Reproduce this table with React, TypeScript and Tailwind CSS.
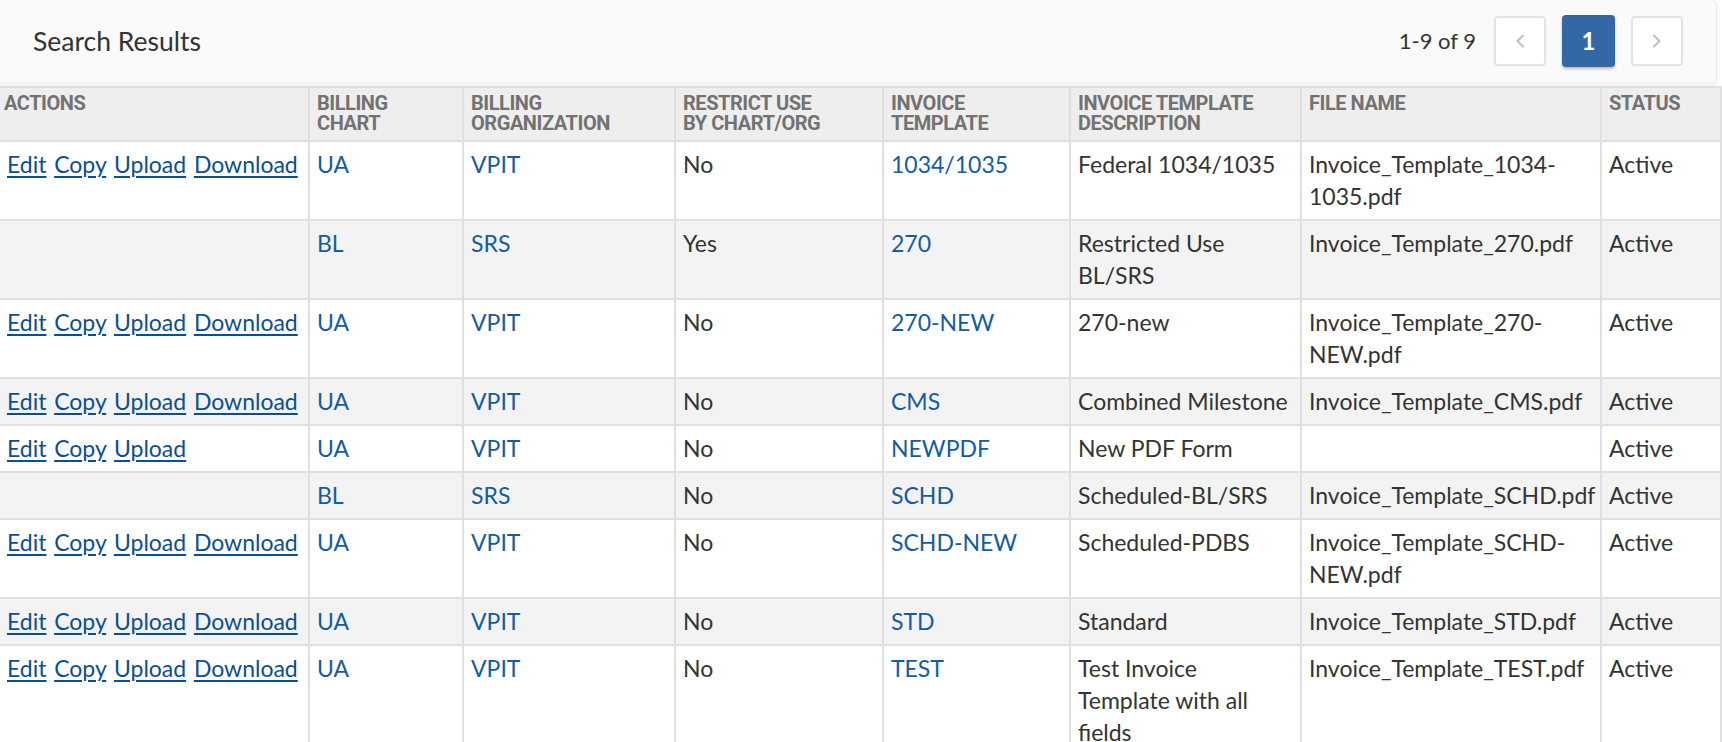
import { FC } from 'react';

type Row = {
  actions: string[];
  chart: string;
  org: string;
  restrict: string;
  template: string;
  description: string;
  fileName: string;
  status: string;
};

const ALL = ['Edit', 'Copy', 'Upload', 'Download'];

const rows: Row[] = [
  { actions: ALL, chart: 'UA', org: 'VPIT', restrict: 'No', template: '1034/1035', description: 'Federal 1034/1035', fileName: 'Invoice_Template_1034-1035.pdf', status: 'Active' },
  { actions: [], chart: 'BL', org: 'SRS', restrict: 'Yes', template: '270', description: 'Restricted Use BL/SRS', fileName: 'Invoice_Template_270.pdf', status: 'Active' },
  { actions: ALL, chart: 'UA', org: 'VPIT', restrict: 'No', template: '270-NEW', description: '270-new', fileName: 'Invoice_Template_270-NEW.pdf', status: 'Active' },
  { actions: ALL, chart: 'UA', org: 'VPIT', restrict: 'No', template: 'CMS', description: 'Combined Milestone', fileName: 'Invoice_Template_CMS.pdf', status: 'Active' },
  { actions: ['Edit', 'Copy', 'Upload'], chart: 'UA', org: 'VPIT', restrict: 'No', template: 'NEWPDF', description: 'New PDF Form', fileName: '', status: 'Active' },
  { actions: [], chart: 'BL', org: 'SRS', restrict: 'No', template: 'SCHD', description: 'Scheduled-BL/SRS', fileName: 'Invoice_Template_SCHD.pdf', status: 'Active' },
  { actions: ALL, chart: 'UA', org: 'VPIT', restrict: 'No', template: 'SCHD-NEW', description: 'Scheduled-PDBS', fileName: 'Invoice_Template_SCHD-NEW.pdf', status: 'Active' },
  { actions: ALL, chart: 'UA', org: 'VPIT', restrict: 'No', template: 'STD', description: 'Standard', fileName: 'Invoice_Template_STD.pdf', status: 'Active' },
  { actions: ALL, chart: 'UA', org: 'VPIT', restrict: 'No', template: 'TEST', description: 'Test Invoice Template with all fields', fileName: 'Invoice_Template_TEST.pdf', status: 'Active' },
];

// header labels, one entry per printed line
const headers: string[][] = [
  ['ACTIONS'],
  ['BILLING', 'CHART'],
  ['BILLING', 'ORGANIZATION'],
  ['RESTRICT USE', 'BY CHART/ORG'],
  ['INVOICE', 'TEMPLATE'],
  ['INVOICE TEMPLATE', 'DESCRIPTION'],
  ['FILE NAME'],
  ['STATUS'],
];

const widths = ['w-[309px]', 'w-[154px]', 'w-[212px]', 'w-[208px]', 'w-[187px]', 'w-[231px]', 'w-[300px]', 'w-[120px]'];

const Chevron: FC<{ dir: 'left' | 'right' }> = ({ dir }) => (
  <svg width="10" height="14" viewBox="0 0 10 14" fill="none">
    <polyline
      points={dir === 'left' ? '8,1.5 2.5,7 8,12.5' : '2,1.5 7.5,7 2,12.5'}
      stroke="#c2c2c2"
      strokeWidth="2.2"
      strokeLinecap="round"
      strokeLinejoin="round"
    />
  </svg>
);

const App: FC = () => {
  return (
    <div className="h-[742px] w-[1722px] overflow-hidden bg-white font-['Lato','Noto_Sans',sans-serif] text-[#333]">
      {/* Panel heading */}
      <div className="flex h-[82px] w-[1716px] items-center justify-between rounded-tr-[6px] bg-[#fafafa] pl-[33px] pr-[33px] shadow-[1px_0_2px_rgba(0,0,0,0.12)]">
        <div className="text-[26.5px] leading-none">Search Results</div>
        <div className="flex items-center">
          <div className="mr-[18px] text-[22px] leading-none">1-9 of 9</div>
          <button className="flex h-[50px] w-[52px] items-center justify-center rounded-[4px] border-2 border-[#e3e3e3] bg-white">
            <Chevron dir="left" />
          </button>
          <button className="mx-[16px] flex h-[52px] w-[53px] items-center justify-center rounded-[4px] bg-[#3467a5] text-[24px] font-bold text-white shadow-[0_2px_3px_rgba(0,0,0,0.25)]">
            1
          </button>
          <button className="flex h-[50px] w-[52px] items-center justify-center rounded-[4px] border-2 border-[#e3e3e3] bg-white">
            <Chevron dir="right" />
          </button>
        </div>
      </div>
      <div className="h-[4px] w-[1716px] bg-[#f3f3f3]" />

      {/* Results table */}
      <table className="w-[1721px] table-fixed border-collapse">
        <colgroup>
          {widths.map((w, i) => (
            <col key={i} className={w} />
          ))}
        </colgroup>
        <thead>
          <tr className="bg-[#eeeeee]">
            {headers.map((h, i) => (
              <th
                key={h.join(' ')}
                className={`border-2 border-[#e0e0e0] pt-[5px] pb-[7px] pr-2 text-left align-top font-['Roboto',sans-serif] text-[20px] leading-[20px] font-bold tracking-[-0.45px] text-[#727272] ${
                  i === 0 ? 'border-l-0 pl-[4px]' : 'pl-[7px]'
                }`}
              >
                {h.map((line) => (
                  <div key={line}>{line}</div>
                ))}
              </th>
            ))}
          </tr>
        </thead>
        <tbody className="text-[23px] leading-[32px]">
          {rows.map((r, idx) => (
            <tr key={idx} className={idx % 2 === 1 ? 'bg-[#f3f3f3]' : 'bg-white'}>
              <td className="border-2 border-l-0 border-[#e0e0e0] pt-[6px] pb-[7px] pl-[7px] align-top whitespace-nowrap [word-spacing:1.8px]">
                {r.actions.map((a, i) => (
                  <span key={a}>
                    <a href="#" className="text-[#0a4f94] underline decoration-[2px] underline-offset-[3px]">
                      {a}
                    </a>
                    {i < r.actions.length - 1 ? ' ' : ''}
                  </span>
                ))}
              </td>
              <td className="border-2 border-[#e0e0e0] pt-[6px] pb-[7px] pl-[7px] align-top text-[#135ca3]">{r.chart}</td>
              <td className="border-2 border-[#e0e0e0] pt-[6px] pb-[7px] pl-[7px] align-top text-[#135ca3]">{r.org}</td>
              <td className="border-2 border-[#e0e0e0] pt-[6px] pb-[7px] pl-[7px] align-top">{r.restrict}</td>
              <td className="border-2 border-[#e0e0e0] pt-[6px] pb-[7px] pl-[7px] align-top text-[#135ca3]">{r.template}</td>
              <td className="border-2 border-[#e0e0e0] pt-[6px] pb-[7px] pl-[7px] pr-[8px] align-top">{r.description}</td>
              <td className="border-2 border-[#e0e0e0] pt-[6px] pb-[7px] pl-[7px] pr-[8px] align-top">{r.fileName}</td>
              <td className="border-2 border-[#e0e0e0] pt-[6px] pb-[7px] pl-[7px] align-top">{r.status}</td>
            </tr>
          ))}
        </tbody>
      </table>
    </div>
  );
};

export default App;
